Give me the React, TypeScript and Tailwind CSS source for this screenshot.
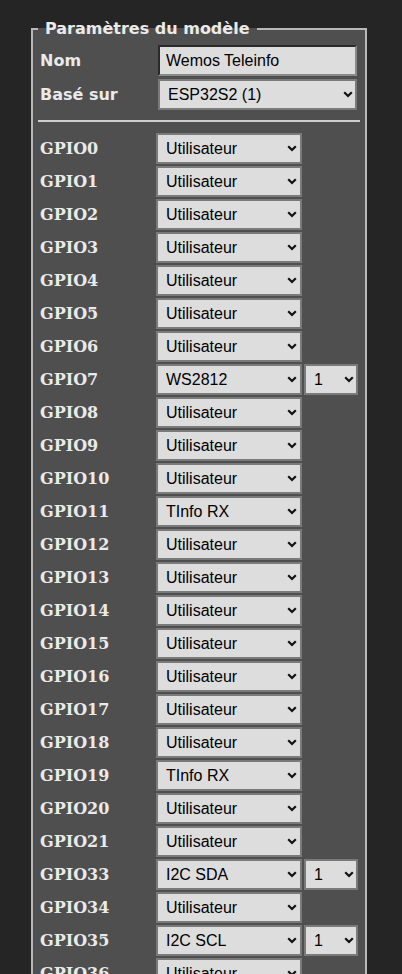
import React from "react";

type Pin = { gpio: string; fn: string; idx?: string };

const pins: Pin[] = [
  { gpio: "GPIO0", fn: "Utilisateur" },
  { gpio: "GPIO1", fn: "Utilisateur" },
  { gpio: "GPIO2", fn: "Utilisateur" },
  { gpio: "GPIO3", fn: "Utilisateur" },
  { gpio: "GPIO4", fn: "Utilisateur" },
  { gpio: "GPIO5", fn: "Utilisateur" },
  { gpio: "GPIO6", fn: "Utilisateur" },
  { gpio: "GPIO7", fn: "WS2812", idx: "1" },
  { gpio: "GPIO8", fn: "Utilisateur" },
  { gpio: "GPIO9", fn: "Utilisateur" },
  { gpio: "GPIO10", fn: "Utilisateur" },
  { gpio: "GPIO11", fn: "TInfo RX" },
  { gpio: "GPIO12", fn: "Utilisateur" },
  { gpio: "GPIO13", fn: "Utilisateur" },
  { gpio: "GPIO14", fn: "Utilisateur" },
  { gpio: "GPIO15", fn: "Utilisateur" },
  { gpio: "GPIO16", fn: "Utilisateur" },
  { gpio: "GPIO17", fn: "Utilisateur" },
  { gpio: "GPIO18", fn: "Utilisateur" },
  { gpio: "GPIO19", fn: "TInfo RX" },
  { gpio: "GPIO20", fn: "Utilisateur" },
  { gpio: "GPIO21", fn: "Utilisateur" },
  { gpio: "GPIO33", fn: "I2C SDA", idx: "1" },
  { gpio: "GPIO34", fn: "Utilisateur" },
  { gpio: "GPIO35", fn: "I2C SCL", idx: "1" },
  { gpio: "GPIO36", fn: "Utilisateur" },
  { gpio: "GPIO37", fn: "Utilisateur" },
  { gpio: "GPIO38", fn: "Utilisateur" },
  { gpio: "GPIO39", fn: "Utilisateur" },
  { gpio: "GPIO40", fn: "Utilisateur" },
];

function Chevron() {
  return (
    <svg width="10" height="7" viewBox="0 0 10 7" className="block">
      <path d="M1.2 1.2 L5 5 L8.8 1.2" fill="none" stroke="#111" strokeWidth="2.2" />
    </svg>
  );
}

// faux select: native look with the arrow drawn by us
function Select({ value, w, chevronRight = 9 }: { value: string; w: string; chevronRight?: number }) {
  return (
    <div className={`relative h-[31px] ${w}`}>
      <select
        defaultValue={value}
        className="h-full w-full appearance-none border-2 border-[#7a7a7a] bg-[#dddddd] pl-[8px] text-[16px] text-black outline-none"
        style={{ fontFamily: '"Liberation Sans", Arial, sans-serif' }}
      >
        <option>{value}</option>
      </select>
      <span
        className="pointer-events-none absolute top-[12px]"
        style={{ right: chevronRight - 5 }}
      >
        <Chevron />
      </span>
    </div>
  );
}

export default function App() {
  return (
    <div
      className="min-h-screen bg-[#252525] pt-[19px] text-[#eaeaea]"
      style={{ fontFamily: '"DejaVu Sans", Verdana, sans-serif' }}
    >
      <fieldset className="ml-[31px] w-[335px] border-2 border-[#b8b8b8] bg-[#4f4f4f] px-[5px] pb-4">
        <legend className="ml-0 px-[7px] text-[16px] font-bold leading-[19px]">Paramètres du modèle</legend>

        {/* nom + base */}
        <div className="flex flex-col gap-[3px] pt-[7px]">
          <div className="flex items-center">
            <b className="w-[120px] pl-[2px] text-[16px]">Nom</b>
            <input
              defaultValue="Wemos Teleinfo"
              className="h-[31px] w-[199px] border-2 border-t-[#2a2a2a] border-l-[#2a2a2a] border-r-[#8a8a8a] border-b-[#8a8a8a] bg-[#dddddd] pl-[6px] text-[16px] text-black outline-none"
              style={{ fontFamily: '"Liberation Sans", Arial, sans-serif' }}
            />
          </div>
          <div className="flex items-center">
            <b className="w-[120px] pl-[2px] text-[16px]">Basé sur</b>
            <Select value="ESP32S2 (1)" w="w-[199px]" />
          </div>
        </div>

        <div className="mt-[10px] h-[2px] w-[322px] bg-[#cdcdcd]" />

        {/* gpio */}
        <div className="mt-[11px] flex flex-col gap-[2px]">
          {pins.map((p) => (
            <div key={p.gpio} className="flex items-center">
              <b
                className="w-[118px] pl-[2px] text-[16px]"
                style={{ fontFamily: '"DejaVu Serif", Georgia, serif' }}
              >
                {p.gpio}
              </b>
              <Select value={p.fn} w="w-[146px]" chevronRight={10} />
              {p.idx && (
                <div className="ml-[2px]">
                  <Select value={p.idx} w="w-[54px]" />
                </div>
              )}
            </div>
          ))}
        </div>
      </fieldset>
    </div>
  );
}
